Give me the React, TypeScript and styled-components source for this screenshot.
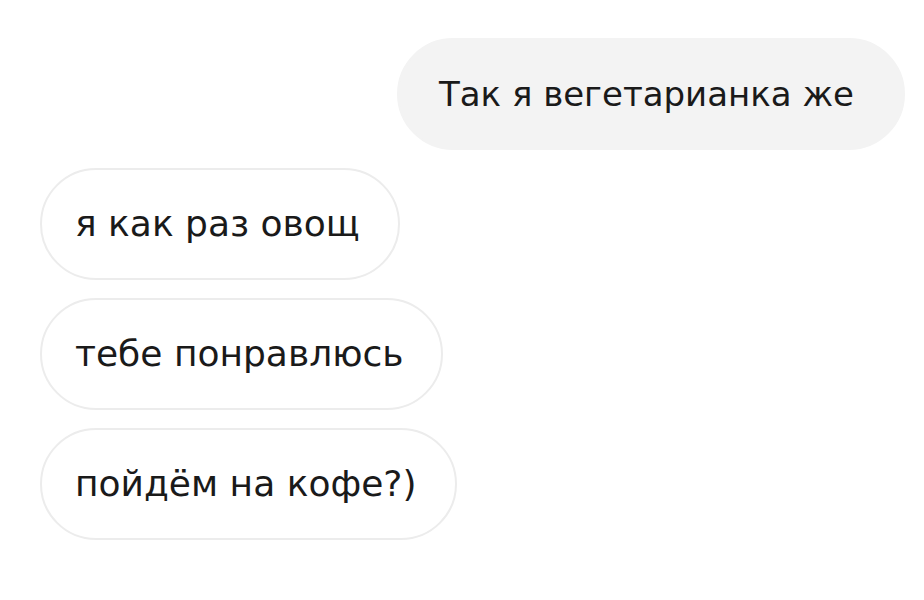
import React from "react";
import styled, { createGlobalStyle } from "styled-components";

const GlobalStyle = createGlobalStyle`
  html, body {
    margin: 0;
    padding: 0;
    background: #ffffff;
  }
  body {
    font-family: "DejaVu Sans", "Liberation Sans", sans-serif;
  }
`;

const Thread = styled.div`
  width: 924px;
  height: 600px;
  box-sizing: border-box;
  padding: 38px 19px 0 40px;
  display: flex;
  flex-direction: column;
  gap: 18px;
  background: #ffffff;
`;

const Row = styled.div<{ $out?: boolean }>`
  display: flex;
  justify-content: ${(p) => (p.$out ? "flex-end" : "flex-start")};
`;

const Bubble = styled.div<{ $out?: boolean }>`
  height: 112px;
  box-sizing: border-box;
  display: flex;
  align-items: center;
  padding: ${(p) => (p.$out ? "0 49px 0 40px" : "0 38px 0 33px")};
  border-radius: 56px;
  background: ${(p) => (p.$out ? "#f3f3f3" : "#ffffff")};
  border: 2px solid ${(p) => (p.$out ? "#f3f3f3" : "#ececec")};
  color: #1a1a1a;
  font-size: ${(p) => (p.$out ? "34px" : "36px")};
  line-height: 1;
  white-space: nowrap;
`;

const messages: { text: string; out?: boolean }[] = [
  { text: "Так я вегетарианка же", out: true },
  { text: "я как раз овощ" },
  { text: "тебе понравлюсь" },
  { text: "пойдём на кофе?)" },
];

export default function App() {
  return (
    <>
      <GlobalStyle />
      <Thread>
        {messages.map((m, i) => (
          <Row key={i} $out={m.out}>
            <Bubble $out={m.out}>{m.text}</Bubble>
          </Row>
        ))}
      </Thread>
    </>
  );
}
